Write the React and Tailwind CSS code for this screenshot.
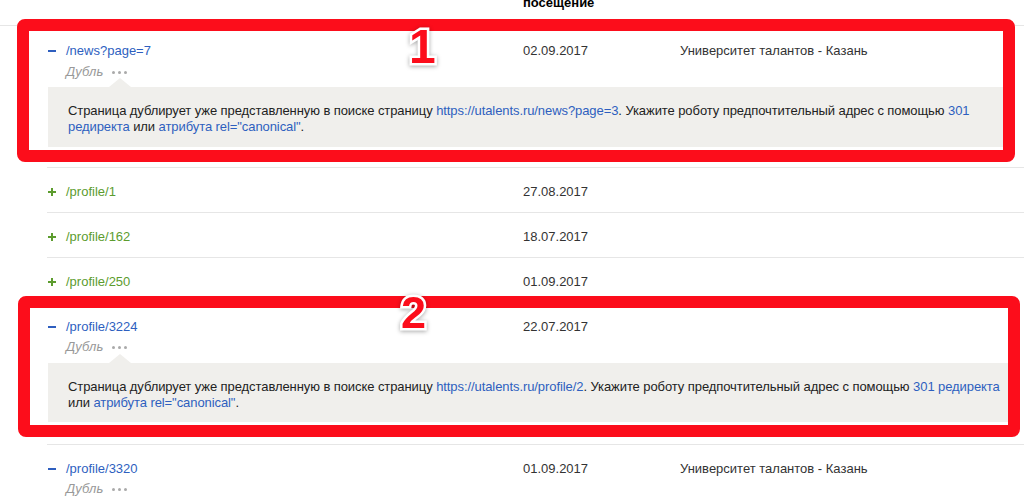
import React from "react";

const rows = [
  { path: "/news?page=7", date: "02.09.2017", place: "Университет талантов - Казань", open: true, mark: "1", url: "https://utalents.ru/news?page=3" },
  { path: "/profile/1", date: "27.08.2017" },
  { path: "/profile/162", date: "18.07.2017" },
  { path: "/profile/250", date: "01.09.2017" },
  { path: "/profile/3224", date: "22.07.2017", open: true, mark: "2", url: "https://utalents.ru/profile/2" },
  { path: "/profile/3320", date: "01.09.2017", place: "Университет талантов - Казань", open: true },
];

const Minus = () => (
  <span className="w-[18px] flex items-center">
    <span className="block w-[8px] h-[2px] bg-[#2e5fbf]" />
  </span>
);

const Plus = () => (
  <span className="w-[18px] flex items-center">
    <span className="relative block w-[8px] h-[8px]">
      <span className="absolute left-0 top-[3px] w-[8px] h-[2px] bg-[#5c9c2e]" />
      <span className="absolute left-[3px] top-0 w-[2px] h-[8px] bg-[#5c9c2e]" />
    </span>
  </span>
);

const Dots = () => (
  <span className="flex items-center gap-[3px] ml-[9px]">
    <span className="block w-[3px] h-[3px] rounded-full bg-[#aaa]" />
    <span className="block w-[3px] h-[3px] rounded-full bg-[#aaa]" />
    <span className="block w-[3px] h-[3px] rounded-full bg-[#aaa]" />
  </span>
);

const RowLine = ({ row }) => (
  <div className="flex leading-[16px]">
    <div className="w-[475px] flex">
      {row.open ? <Minus /> : <Plus />}
      <span className={row.open ? "text-[#2e5fbf]" : "text-[#5c9c2e]"}>{row.path}</span>
    </div>
    <div className="w-[157px] text-[#333]">{row.date}</div>
    <div className="text-[#333]">{row.place}</div>
  </div>
);

const Dubl = ({ className }) => (
  <div className={`flex items-center pl-[18px] leading-[16px] ${className}`}>
    <span className="italic text-[#999]">Дубль</span>
    <Dots />
  </div>
);

const Explain = ({ url, second, className }) => (
  <div className={`relative bg-[#f0efec] pl-[20px] pr-[2px] pt-[16px] leading-[16px] tracking-[-0.08px] text-[#222] ${className}`}>
    <svg className="absolute left-[61px] -top-[9px]" width="22" height="9" viewBox="0 0 22 9">
      <path d="M0 9 L11 0 L22 9 Z" fill="#f0efec" />
    </svg>
    Страница дублирует уже представленную в поиске страницу{" "}
    <span className="text-[#2e5fbf]">{url}</span>. Укажите роботу предпочтительный адрес с помощью{" "}
    {second ? (
      <>
        <span className="text-[#2e5fbf] whitespace-nowrap">301 редиректа</span>
        <br />
        или
      </>
    ) : (
      <>
        <span className="text-[#2e5fbf]">301</span>
        <br />
        <span className="text-[#2e5fbf]">редиректа</span> или
      </>
    )}{" "}
    <span className="text-[#2e5fbf]">атрибута rel="canonical"</span>.
  </div>
);

const Mark = ({ children, className }) => (
  <span
    className={`absolute font-bold leading-none text-[#fc0d1b] [-webkit-text-stroke:5px_white] [paint-order:stroke_fill] drop-shadow-[0_1px_2px_rgba(0,0,0,0.35)] ${className}`}
  >
    {children}
  </span>
);

export default function App() {
  return (
    <div className="w-[1024px] h-[503px] overflow-hidden bg-white text-[13px] font-['Liberation_Sans',Arial,sans-serif]">
      {/* header, mostly scrolled out of view */}
      <div className="h-[26px] flex items-end border-b border-[#e6e6e6]">
        <div className="ml-[523px] pb-[14px] font-bold leading-[16px] text-black">
          Последнее
          <br />
          посещение
        </div>
      </div>

      {/* flagged row 1 */}
      <div className="relative -mt-[7px] ml-[17px] w-[998px] h-[143px] border-[12px] border-[#fc0d1b] rounded-[8px] bg-white pl-[19px] pt-[12px] pb-[3px]">
        <Mark className="text-[48px] left-[380px] -top-[8px]">1</Mark>
        <RowLine row={rows[0]} />
        <Dubl className="mt-[5px]" />
        <Explain url={rows[0].url} className="mt-[7px] pb-[12px]" />
      </div>

      {/* plain rows */}
      <div className="mt-[5px] ml-[47px]">
        {rows.slice(1, 4).map((row) => (
          <div key={row.path} className="border-t border-[#e6e6e6] pl-[1px] pt-[16px] pb-[12px]">
            <RowLine row={row} />
          </div>
        ))}
      </div>

      {/* flagged row 2 */}
      <div className="relative -mt-[6px] ml-[18px] w-[1002px] h-[141px] border-[12px] border-[#fc0d1b] rounded-[8px] bg-white pl-[18px] pt-[11px] pb-[3px]">
        <Mark className="text-[45px] left-[371px] -top-[18px]">2</Mark>
        <RowLine row={rows[4]} />
        <Dubl className="mt-[4px]" />
        <Explain url={rows[4].url} second className="mt-[8px] pb-[11px]" />
      </div>

      {/* last row */}
      <div className="mt-[7px] ml-[47px] border-t border-[#e6e6e6] pl-[1px] pt-[16px]">
        <RowLine row={rows[5]} />
        <Dubl className="mt-[4px]" />
      </div>
    </div>
  );
}
